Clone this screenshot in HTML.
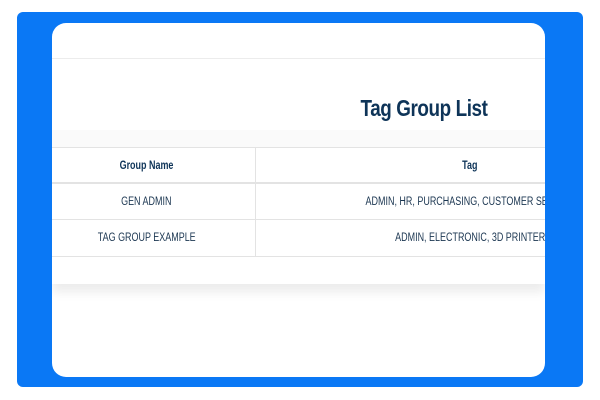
<!DOCTYPE html>
<html><head><style>
body{margin:0;width:600px;height:400px;background:#fff;position:relative;overflow:hidden;font-family:"Liberation Sans",sans-serif;}
.blue{position:absolute;left:17px;top:12px;width:566px;height:375px;background:#0a78f5;border-radius:6px;}
.card{position:absolute;left:52px;top:23px;width:493px;height:354px;background:#fff;border-radius:14px;overflow:hidden;}
.l1{position:absolute;left:0;right:0;top:35px;height:1px;background:#ececec;}
.band{position:absolute;left:0;right:0;top:107px;height:20px;background:#fafafa;}
.title{position:absolute;left:372px;top:72px;width:200px;margin-left:-100px;text-align:center;font-size:23px;font-weight:bold;color:#0e3458;letter-spacing:-0.5px;transform:scaleX(0.82);}
.tbl{position:absolute;left:0;top:124px;width:493px;height:137px;background:#fff;box-shadow:0 8px 10px rgba(0,0,0,0.08);}
.row{position:absolute;left:0;width:493px;border-top:1px solid #e3e3e3;font-size:11.5px;color:#1a3550;}
.c1,.c2{position:absolute;top:0;height:100%;display:flex;align-items:center;justify-content:center;white-space:nowrap;}
.c1{left:-14px;width:217px;}
.c2{left:203px;width:428px;border-left:1px solid #e3e3e3;}
.c1 span,.c2 span{display:inline-block;transform:scaleX(0.78);}
.h{font-weight:bold;color:#0e3458;}
</style></head><body>
<div class="blue"></div>
<div class="card">
<div class="l1"></div>
<div class="band"></div>
<div class="title">Tag Group List</div>
<div class="tbl">
<div class="row h" style="top:0;height:35px;"><div class="c1"><span>Group Name</span></div><div class="c2"><span>Tag</span></div></div>
<div class="row" style="top:35px;height:36px;border-top:2px solid #e3e3e3"><div class="c1"><span>GEN ADMIN</span></div><div class="c2"><span>ADMIN, HR, PURCHASING, CUSTOMER SERVICE</span></div></div>
<div class="row" style="top:72px;height:36px;"><div class="c1"><span>TAG GROUP EXAMPLE</span></div><div class="c2"><span>ADMIN, ELECTRONIC, 3D PRINTER</span></div></div>
<div class="row" style="top:109px;height:28px;"></div>
</div>
</div>
</body></html>
